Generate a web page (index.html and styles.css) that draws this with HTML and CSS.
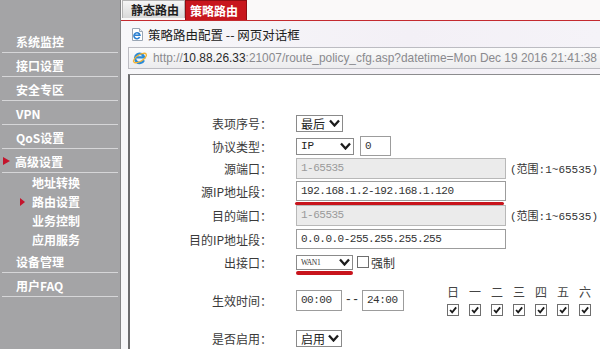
FILE: index.html
```html
<!DOCTYPE html>
<html lang="zh-CN">
<head>
    <meta charset="UTF-8">
    <title>策略路由配置</title>
    <link rel="stylesheet" href="styles.css">
</head>
<body>
<!-- Left menu -->
<div class="sidebar">
    <div class="menu-item">系统监控</div>
    <div class="menu-item">接口设置</div>
    <div class="menu-item">安全专区</div>
    <div class="menu-item">VPN</div>
    <div class="menu-item">QoS设置</div>
    <div class="menu-item open"><span class="arrow"></span>高级设置</div>
    <div class="submenu">
        <div class="sub-item">地址转换</div>
        <div class="sub-item active"><span class="arrow small"></span>路由设置</div>
        <div class="sub-item">业务控制</div>
        <div class="sub-item">应用服务</div>
    </div>
    <div class="menu-item">设备管理</div>
    <div class="menu-item">用户FAQ</div>
</div>

<div class="main">
    <div class="tabs">
        <div class="tab">静态路由</div>
        <div class="tab current">策略路由</div>
    </div>
    <div class="tab-line"></div>

    <!-- Dialog window -->
    <div class="dialog">
        <div class="dlg-title">
            <svg class="page-icon" width="11" height="13" viewBox="0 0 11 13">
                <path d="M0.5 0.5 H7.5 L10.5 3.5 V12.5 H0.5 Z" fill="#fff" stroke="#9aa6b4"/>
                <path d="M7.5 0.5 V3.5 H10.5" fill="#e6ebf0" stroke="#9aa6b4"/>
                <path d="M7.6 9.2 A3 3 0 1 1 7.9 7.2 H2.9" fill="none" stroke="#2b7fd0" stroke-width="1.6"/>
            </svg>
            <span>策略路由配置 -- 网页对话框</span>
        </div>
        <div class="addr">
            <svg class="ie-logo" width="16" height="16" viewBox="0 0 16 16">
                <path d="M11.9 10.2 A4.6 4.6 0 1 1 12.2 7.4 H4.4" fill="none" stroke="#2a8bd6" stroke-width="2.4"/>
                <ellipse cx="8" cy="8" rx="7.3" ry="3.2" transform="rotate(-32 8 8)" fill="none" stroke="#f2b233" stroke-width="1.3"/>
            </svg>
            <span class="url">http://<b>10.88.26.33</b>:21007/route_policy_cfg.asp?datetime=Mon Dec 19 2016 21:41:38</span>
        </div>

        <div class="content">
            <div class="row">
                <div class="label">表项序号：</div>
                <div class="ctl">
                    <div class="select sel-order">最后<svg class="chev" viewBox="0 0 11 8"><path d="M1 1.5 L5.5 6.5 L10 1.5"/></svg></div>
                </div>
            </div>
            <div class="row tight">
                <div class="label">协议类型：</div>
                <div class="ctl">
                    <div class="select sel-proto"><span class="mono">IP</span><svg class="chev" viewBox="0 0 11 8"><path d="M1 1.5 L5.5 6.5 L10 1.5"/></svg></div>
                    <div class="input num">0</div>
                </div>
            </div>
            <div class="row tight">
                <div class="label">源端口：</div>
                <div class="ctl">
                    <div class="input wide disabled">1-65535</div>
                    <span class="range">(范围:1~65535)</span>
                </div>
            </div>
            <div class="row">
                <div class="label">源IP地址段：</div>
                <div class="ctl">
                    <div class="input wide marked">192.168.1.2-192.168.1.120</div>
                </div>
            </div>
            <div class="row">
                <div class="label">目的端口：</div>
                <div class="ctl">
                    <div class="input wide disabled">1-65535</div>
                    <span class="range">(范围:1~65535)</span>
                </div>
            </div>
            <div class="row">
                <div class="label">目的IP地址段：</div>
                <div class="ctl">
                    <div class="input wide">0.0.0.0-255.255.255.255</div>
                </div>
            </div>
            <div class="row tight">
                <div class="label">出接口：</div>
                <div class="ctl">
                    <div class="select sel-wan marked"><span class="wan">WAN1</span><svg class="chev" viewBox="0 0 11 8"><path d="M1 1.5 L5.5 6.5 L10 1.5"/></svg></div>
                    <span class="cb"></span>
                    <span class="cb-text">强制</span>
                </div>
            </div>
            <div class="row tall">
                <div class="label">生效时间：</div>
                <div class="ctl">
                    <div class="input time">00:00</div>
                    <span class="dash">--</span>
                    <div class="input time short">24:00</div>
                    <div class="days">
                        <span>日</span><span>一</span><span>二</span><span>三</span><span>四</span><span>五</span><span>六</span>
                        <span class="cb on"><svg viewBox="0 0 12 12"><path d="M2.5 6 L5 8.8 L9.8 2.8"/></svg></span>
                        <span class="cb on"><svg viewBox="0 0 12 12"><path d="M2.5 6 L5 8.8 L9.8 2.8"/></svg></span>
                        <span class="cb on"><svg viewBox="0 0 12 12"><path d="M2.5 6 L5 8.8 L9.8 2.8"/></svg></span>
                        <span class="cb on"><svg viewBox="0 0 12 12"><path d="M2.5 6 L5 8.8 L9.8 2.8"/></svg></span>
                        <span class="cb on"><svg viewBox="0 0 12 12"><path d="M2.5 6 L5 8.8 L9.8 2.8"/></svg></span>
                        <span class="cb on"><svg viewBox="0 0 12 12"><path d="M2.5 6 L5 8.8 L9.8 2.8"/></svg></span>
                        <span class="cb on"><svg viewBox="0 0 12 12"><path d="M2.5 6 L5 8.8 L9.8 2.8"/></svg></span>
                    </div>
                </div>
            </div>
            <div class="row tight">
                <div class="label">是否启用：</div>
                <div class="ctl">
                    <div class="select sel-on">启用<svg class="chev" viewBox="0 0 11 8"><path d="M1 1.5 L5.5 6.5 L10 1.5"/></svg></div>
                </div>
            </div>
        </div>
    </div>
</div>
</body>
</html>
```
FILE: styles.css
```css
* {
    box-sizing: border-box;
    margin: 0;
    padding: 0;
}

html, body {
    height: 100%;
    overflow: hidden;
}

body {
    display: flex;
    width: 600px;
    height: 349px;
    font-family: "Noto Sans CJK SC", "Liberation Sans", sans-serif;
    font-size: 12px;
    background: #a4a4a6;
}

/* Left menu */
.sidebar {
    width: 121px;
    flex: none;
    background: #a4a4a6;
    border-right: 1px solid #848486;
    padding-top: 29px;
}

.menu-item {
    height: 24px;
    margin: 0 2px;
    padding: 4px 0 0 14px;
    line-height: 17px;
    color: #fff;
    font-weight: bold;
    border-bottom: 1px solid #d6d6d8;
    display: flex;
    align-items: flex-start;
}

.menu-item.open {
    padding-left: 1px;
}

.arrow {
    width: 0;
    height: 0;
    margin: 4px 5px 0 0;
    border-left: 7px solid #c4142c;
    border-top: 4px solid transparent;
    border-bottom: 4px solid transparent;
}

.arrow.small {
    margin: 6px 7px 0 0;
    border-left-width: 5px;
    border-top-width: 4px;
    border-bottom-width: 4px;
}

.sub-item {
    height: 19px;
    line-height: 19px;
    padding-left: 32px;
    color: #fff;
    font-weight: bold;
    display: flex;
    align-items: flex-start;
}

.sub-item.active {
    padding-left: 20px;
}

/* Right side */
.main {
    flex: 1;
    min-width: 0;
    display: flex;
    flex-direction: column;
    background: #d8d8da;
}

.tabs {
    height: 20px;
    display: flex;
    align-items: flex-start;
    padding-left: 1px;
    background: #faf9f9;
}

.tab {
    width: 63px;
    height: 18px;
    padding-left: 8px;
    line-height: 17px;
    font-weight: bold;
    color: #1e1e1e;
    background: linear-gradient(#f6f6f6, #d9d9d9);
    border: 1px solid #b4b4b4;
    border-bottom: none;
}

.tab.current {
    width: 62px;
    height: 20px;
    padding-left: 4px;
    line-height: 19px;
    color: #fff;
    background: #c8161d;
    border-color: #8e0d12;
}

.tab-line {
    height: 4px;
    background: #9c1a1f;
    border-top: 1px solid #c42a2f;
}

.dialog {
    flex: 1;
    display: flex;
    flex-direction: column;
    background: linear-gradient(90deg, #f7f7f9 0%, #f3f0f6 60%, #f5f3f8 100%);
}

.dlg-title {
    height: 26px;
    display: flex;
    align-items: center;
    gap: 5px;
    padding-left: 11px;
    color: #202020;
    font-size: 12.5px;
}

.addr {
    height: 22px;
    margin-left: 7px;
    display: flex;
    align-items: center;
    gap: 5px;
    padding-left: 3px;
    border: 1px solid #bcbcc2;
    border-right: none;
    background: linear-gradient(#fbfbfb, #ececee);
    overflow: hidden;
}

.ie-logo {
    flex: none;
}

.url {
    font-family: "Liberation Sans", sans-serif;
    font-size: 11.9px;
    color: #8a8a8e;
    white-space: nowrap;
}

.url b {
    font-weight: normal;
    color: #2a2a2a;
}

.content {
    flex: 1;
    margin: 5px 0 0 7px;
    padding-top: 36px;
    background: #fff;
    border-left: 2px solid #6c6c6e;
    border-top: 1px solid #8c8c8e;
}

/* Form rows */
.row {
    height: 24px;
    display: flex;
    align-items: center;
}

.row.tight {
    height: 22px;
}

.row.tall {
    height: 54px;
}

.label {
    width: 142px;
    flex: none;
    text-align: right;
    color: #3a3a3a;
}

.ctl {
    margin-left: 24px;
    display: flex;
    align-items: center;
}

.select {
    height: 17px;
    display: flex;
    align-items: center;
    justify-content: space-between;
    padding: 0 2px 0 4px;
    border: 1px solid #8a8a8a;
    background: #fff;
    color: #222;
    position: relative;
}

.sel-order { width: 47px; }
.sel-proto { width: 58px; }
.sel-wan { width: 57px; height: 15px; }
.sel-on { width: 46px; }

.chev {
    width: 11px;
    height: 8px;
    fill: none;
    stroke: #1c1c1c;
    stroke-width: 2.3;
}

.mono {
    font-family: "Liberation Mono", monospace;
    font-size: 11px;
}

.wan {
    font-family: "Liberation Serif", serif;
    font-size: 7.5px;
    letter-spacing: -0.4px;
    color: #333;
}

.input {
    height: 20px;
    display: flex;
    align-items: center;
    padding-left: 4px;
    border: 1px solid #9c9c9c;
    background: #fff;
    font-family: "Liberation Mono", monospace;
    font-size: 11px;
    letter-spacing: -0.5px;
    color: #333;
    position: relative;
}

.input.wide { width: 210px; }

.input.num {
    width: 31px;
    margin-left: 6px;
}

.input.disabled {
    height: 21px;
    background: #ebebeb;
    border-color: #b8b8b8;
    color: #9a9a9a;
}

.input.time {
    width: 46px;
    height: 21px;
}

.input.time.short { width: 42px; }

/* red marks drawn over the screenshot */
.marked::after {
    content: "";
    position: absolute;
    left: -2px;
    right: 1px;
    bottom: -5px;
    height: 3px;
    border-radius: 2px;
    background: #c8141c;
}

.sel-wan.marked::after {
    bottom: -6px;
    left: -1px;
    right: -1px;
    height: 4px;
}

.range {
    margin-left: 4px;
    font-family: "Liberation Mono", "Noto Sans CJK SC", monospace;
    font-size: 11px;
    color: #333;
}

.cb {
    width: 12px;
    height: 12px;
    border: 1px solid #6e6e6e;
    background: #fff;
    display: inline-flex;
}

.row .ctl > .cb {
    margin-left: 4px;
}

.cb svg {
    width: 10px;
    height: 10px;
    fill: none;
    stroke: #1a1a1a;
    stroke-width: 2.2;
}

.cb-text {
    margin-left: 2px;
    color: #333;
}

.dash {
    width: 20px;
    text-align: center;
    color: #333;
    font-family: "Liberation Mono", monospace;
}

.days {
    margin-left: 38px;
    display: grid;
    grid-template-columns: repeat(7, 22px);
    row-gap: 6px;
    justify-items: center;
    align-items: center;
    color: #444;
    line-height: 13px;
}
```
